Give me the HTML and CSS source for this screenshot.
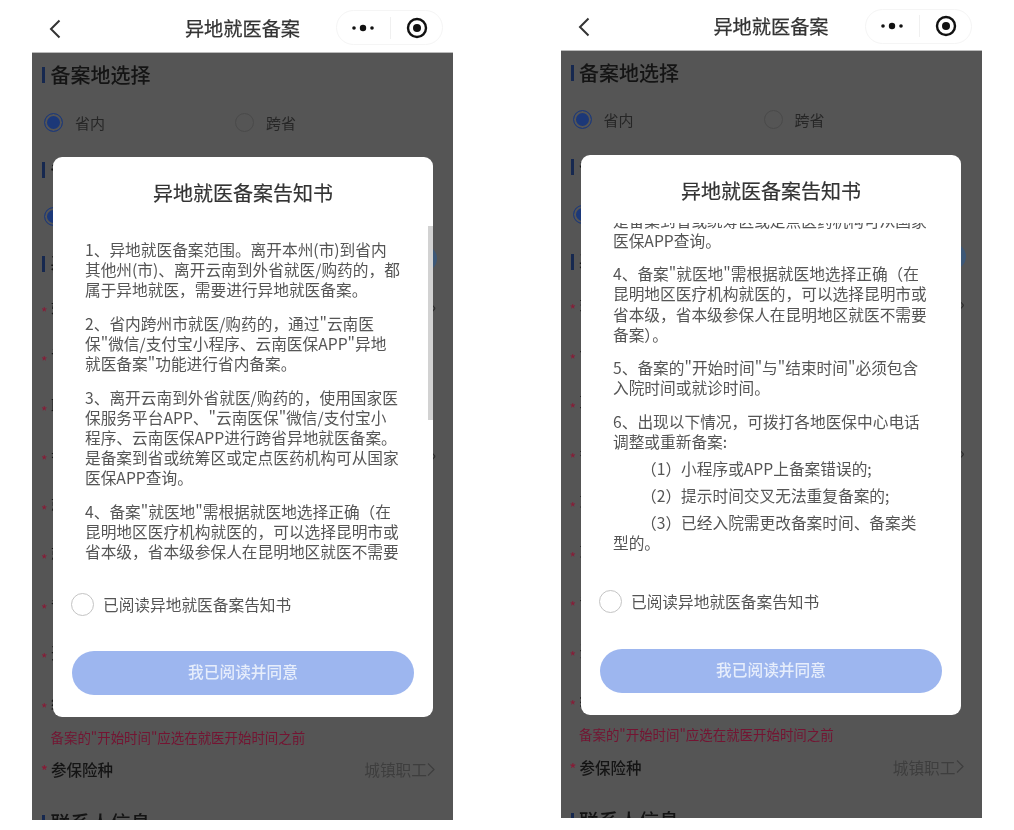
FILE: index.html
```html
<!DOCTYPE html>
<html lang="zh-CN">
<head>
<meta charset="utf-8">
<title>异地就医备案</title>
<link rel="stylesheet" href="styles.css">
</head>
<body>
<main class="screens">

<section class="phone">
  <header class="nav">
    <svg class="nav-back" width="12" height="20" viewBox="0 0 12 20"><path d="M10.5 1.5 2 10l8.500 8.500" fill="none" stroke="#333" stroke-width="2"/></svg>
    <h1 class="nav-title">异地就医备案</h1>
    <div class="capsule">
      <svg width="24" height="10" viewBox="0 0 24 10"><circle cx="3" cy="5" r="1.800" fill="#111"/><circle cx="12" cy="5" r="3.200" fill="#111"/><circle cx="21" cy="5" r="1.800" fill="#111"/></svg>
      <span class="capsule-line"></span>
      <svg width="22" height="22" viewBox="0 0 22 22"><circle cx="11" cy="11" r="9" fill="none" stroke="#111" stroke-width="2.400"/><circle cx="11" cy="11" r="4" fill="#111"/></svg>
    </div>
  </header>
  <div class="page">
    <div class="sec-title"><i class="sec-bar"></i>备案地选择</div>
    <div class="radio-row">
      <span class="radio-item"><i class="radio radio-on"></i>省内</span>
      <span class="radio-item"><i class="radio"></i>跨省</span>
    </div>
    <div class="sec-title"><i class="sec-bar"></i>备案类型</div>
    <div class="radio-row">
      <span class="radio-item"><i class="radio radio-on"></i>异地长期</span>
      <span class="radio-item"><i class="radio"></i>异地临时</span>
    </div>
    <div class="sec-title"><i class="sec-bar"></i>基本信息<span class="sec-pill">定位</span></div>
    <div class="fields">
      <div class="field"><em>*</em>姓名<span class="field-val">›</span></div>
      <div class="field"><em>*</em>证件号码</div>
      <div class="field"><em>*</em>联系电话</div>
      <div class="field"><em>*</em>参保地<span class="field-val">›</span></div>
      <div class="field"><em>*</em>就医地</div>
      <div class="field"><em>*</em>就医机构</div>
      <div class="field"><em>*</em>备案原因</div>
      <div class="field"><em>*</em>开始时间</div>
      <div class="field"><em>*</em>结束时间</div>
    </div>
    <p class="tip">备案的"开始时间"应选在就医开始时间之前</p>
    <div class="field field-strong"><em>*</em>参保险种<span class="field-val-wide">城镇职工<svg width="8" height="14" viewBox="0 0 8 14"><path d="M1 1l6 6-6 6" fill="none" stroke="#3e3e3e" stroke-width="1.200"/></svg></span></div>
    <div class="sec-title sec-title-last"><i class="sec-bar"></i>联系人信息</div>
  </div>

  <div class="modal">
    <h2 class="modal-title">异地就医备案告知书</h2>
    <div class="notice">
      <div class="notice-body">
        <p>1、异地就医备案范围。离开本州(市)到省内<br>其他州(市)、离开云南到外省就医/购药的，都<br>属于异地就医，需要进行异地就医备案。</p>
        <p>2、省内跨州市就医/购药的，通过"云南医<br>保"微信/支付宝小程序、云南医保APP"异地<br>就医备案"功能进行省内备案。</p>
        <p>3、离开云南到外省就医/购药的，使用国家医<br>保服务平台APP、"云南医保"微信/支付宝小<br>程序、云南医保APP进行跨省异地就医备案。<br>是备案到省或统筹区或定点医药机构可从国家<br>医保APP查询。</p>
        <p>4、备案"就医地"需根据就医地选择正确（在<br>昆明地区医疗机构就医的，可以选择昆明市或<br>省本级，省本级参保人在昆明地区就医不需要<br>备案）。</p>
      </div>
    </div>
    <i class="scroll-thumb"></i>
    <label class="agree"><i class="agree-circle"></i>已阅读异地就医备案告知书</label>
    <div class="agree-btn">我已阅读并同意</div>
  </div>
</section>

<section class="phone phone-b">
  <header class="nav">
    <svg class="nav-back" width="12" height="20" viewBox="0 0 12 20"><path d="M10.5 1.5 2 10l8.500 8.500" fill="none" stroke="#333" stroke-width="2"/></svg>
    <h1 class="nav-title">异地就医备案</h1>
    <div class="capsule">
      <svg width="24" height="10" viewBox="0 0 24 10"><circle cx="3" cy="5" r="1.800" fill="#111"/><circle cx="12" cy="5" r="3.200" fill="#111"/><circle cx="21" cy="5" r="1.800" fill="#111"/></svg>
      <span class="capsule-line"></span>
      <svg width="22" height="22" viewBox="0 0 22 22"><circle cx="11" cy="11" r="9" fill="none" stroke="#111" stroke-width="2.400"/><circle cx="11" cy="11" r="4" fill="#111"/></svg>
    </div>
  </header>
  <div class="page">
    <div class="sec-title"><i class="sec-bar"></i>备案地选择</div>
    <div class="radio-row">
      <span class="radio-item"><i class="radio radio-on"></i>省内</span>
      <span class="radio-item"><i class="radio"></i>跨省</span>
    </div>
    <div class="sec-title"><i class="sec-bar"></i>备案类型</div>
    <div class="radio-row">
      <span class="radio-item"><i class="radio radio-on"></i>异地长期</span>
      <span class="radio-item"><i class="radio"></i>异地临时</span>
    </div>
    <div class="sec-title"><i class="sec-bar"></i>基本信息<span class="sec-pill">定位</span></div>
    <div class="fields">
      <div class="field"><em>*</em>姓名<span class="field-val">›</span></div>
      <div class="field"><em>*</em>证件号码</div>
      <div class="field"><em>*</em>联系电话</div>
      <div class="field"><em>*</em>参保地<span class="field-val">›</span></div>
      <div class="field"><em>*</em>就医地</div>
      <div class="field"><em>*</em>就医机构</div>
      <div class="field"><em>*</em>备案原因</div>
      <div class="field"><em>*</em>开始时间</div>
      <div class="field"><em>*</em>结束时间</div>
    </div>
    <p class="tip">备案的"开始时间"应选在就医开始时间之前</p>
    <div class="field field-strong"><em>*</em>参保险种<span class="field-val-wide">城镇职工<svg width="8" height="14" viewBox="0 0 8 14"><path d="M1 1l6 6-6 6" fill="none" stroke="#3e3e3e" stroke-width="1.200"/></svg></span></div>
    <div class="sec-title sec-title-last"><i class="sec-bar"></i>联系人信息</div>
  </div>

  <div class="modal">
    <h2 class="modal-title">异地就医备案告知书</h2>
    <div class="notice">
      <div class="notice-body notice-body-scrolled">
        <p>是备案到省或统筹区或定点医药机构可从国家<br>医保APP查询。</p>
        <p>4、备案"就医地"需根据就医地选择正确（在<br>昆明地区医疗机构就医的，可以选择昆明市或<br>省本级，省本级参保人在昆明地区就医不需要<br>备案）。</p>
        <p>5、备案的"开始时间"与"结束时间"必须包含<br>入院时间或就诊时间。</p>
        <p class="tight">6、出现以下情况，可拨打各地医保中心电话<br>调整或重新备案:</p>
        <p class="tight sub">（1）小程序或APP上备案错误的;</p>
        <p class="tight sub">（2）提示时间交叉无法重复备案的;</p>
        <p class="sub">（3）已经入院需更改备案时间、备案类<br><span class="sub-wrap">型的。</span></p>
      </div>
    </div>
    <label class="agree"><i class="agree-circle"></i>已阅读异地就医备案告知书</label>
    <div class="agree-btn">我已阅读并同意</div>
  </div>
</section>

</main>
</body>
</html>
```

FILE: styles.css
```css
* { box-sizing: border-box; }

html, body {
  margin: 0;
  padding: 0;
  background: #fff;
}

body {
  font-family: "Noto Sans CJK SC", "Noto Sans", "Liberation Sans", sans-serif;
  overflow: hidden;
}

.screens {
  display: flex;
  align-items: flex-start;
  gap: 107.5px;
  padding-left: 32px;
  height: 830px;
}

.phone {
  position: relative;
  width: 421px;
  height: 820px;
  overflow: hidden;
  flex: none;
  filter: blur(0.6px);
  --nav-h: 53px;
}

.phone-b {
  height: 818px;
  --nav-h: 50.5px;
}

/* navigation bar */
.nav {
  position: relative;
  height: var(--nav-h);
  background: #fff;
  border-bottom: 1.5px solid #bbb;
  display: flex;
  align-items: center;
  justify-content: center;
  padding-top: 3px;
}

.nav-back {
  position: absolute;
  left: 17px;
  top: calc(var(--nav-h) / 2 - 8px);
}

.nav-title {
  margin: 0;
  font-size: 19.200px;
  font-weight: 400;
  -webkit-text-stroke: 0.25px #333;
  color: #333;
  line-height: 26px;
}

.capsule {
  position: absolute;
  left: 304px;
  top: calc(var(--nav-h) / 2 - 16.500px);
  width: 107px;
  height: 35px;
  border: 1px solid #f5f5f5;
  border-radius: 18px;
  display: flex;
  align-items: center;
  padding: 0 14px 0 14px;
  justify-content: space-between;
}

.capsule-line {
  width: 1px;
  height: 22px;
  background: #f0f0f0;
}

/* dimmed page behind the dialog */
.page {
  background: #555;
  height: calc(100% - var(--nav-h));
  color: #141414;
}

.sec-title {
  position: relative;
  height: 44px;
  display: flex;
  align-items: center;
  padding-left: 18.500px;
  font-size: 20px;
  font-weight: 500;
  line-height: 1;
  color: #141414;
}

.sec-bar {
  position: absolute;
  left: 10px;
  top: 14px;
  width: 3px;
  height: 16px;
  background: #16284f;
}

.sec-pill {
  position: absolute;
  right: 16px;
  top: 3px;
  width: 50px;
  height: 27px;
  border-radius: 14px;
  background: #3d5877;
  color: #3d5877;
  font-size: 12px;
  line-height: 27px;
  text-align: center;
}

.radio-row {
  display: flex;
  height: 50px;
  margin-bottom: 0.500px;
  align-items: center;
  padding-left: 12px;
  font-size: 15px;
  color: #262626;
}

.radio-item {
  display: flex;
  align-items: center;
  gap: 12px;
  width: 191px;
}

.radio {
  width: 19px;
  height: 19px;
  border: 1px solid #4a4a4a;
  border-radius: 50%;
  background: #555;
  flex: none;
}

.radio-on {
  border: 1.500px solid #1f3a78;
  background: #1c3878;
  box-shadow: inset 0 0 0 2px #555;
}

.fields { margin-top: -5px; }

.field {
  position: relative;
  height: 49.500px;
  display: flex;
  align-items: center;
  padding-left: 19px;
  font-size: 15.500px;
  color: #141414;
}

.field em {
  position: absolute;
  left: 9px;
  top: 50%;
  transform: translateY(calc(-50% + 1px));
  font-style: normal;
  color: #8a1a36;
  font-size: 14px;
  line-height: 1;
}

.fields .field em {
  transform: translateY(calc(-50% + 6px));
}

.field-val {
  position: absolute;
  right: 17px;
  font-size: 16px;
  color: #2a2a2a;
}

.field-val-wide {
  position: absolute;
  right: 18px;
  top: 50%;
  transform: translateY(-50%);
  display: flex;
  align-items: center;
  gap: 0;
  font-size: 15.700px;
  font-weight: 400;
  color: #3e3e3e;
}

.tip {
  margin: 0;
  height: 18px;
  padding: 1px 0 0 18.500px;
  font-size: 13.450px;
  line-height: 18px;
  color: #741432;
  white-space: nowrap;
}

.field-strong { font-weight: 500; }

.sec-title-last { margin-top: 7px; }

/* dialog */
.modal {
  position: absolute;
  left: 21px;
  top: 157px;
  width: 380px;
  height: 560px;
  background: #fff;
  border-radius: 9px;
  display: flex;
  flex-direction: column;
}

.phone-b .modal {
  left: 20.500px;
  top: 154.500px;
}

.modal-title {
  margin: 0;
  height: 68px;
  padding-top: 22px;
  font-size: 20px;
  font-weight: 400;
  line-height: 28px;
  text-align: center;
  color: #333;
  -webkit-text-stroke: 0.2px #333;
}

.notice {
  height: 335px;
  overflow: hidden;
  padding: 15px 0 0 32px;
  flex: none;
}

.notice-body {
  font-size: 15.700px;
  line-height: 20.200px;
  color: #555;
  white-space: nowrap;
}

.notice-body-scrolled {
  margin-top: -27px;
}

.notice-body p {
  margin: 0 0 13.200px;
}

.notice-body p.tight { margin-bottom: 6.800px; }

.notice-body .sub { padding-left: 28px; }

.sub-wrap { margin-left: -28px; }

.scroll-thumb {
  position: absolute;
  right: 0;
  top: 69px;
  width: 5px;
  height: 194px;
  background: #d2d2d2;
}

.agree {
  margin: 32px 0 0 18px;
  height: 24px;
  display: flex;
  align-items: center;
  gap: 9px;
  font-size: 15.700px;
  color: #555;
}

.agree-circle {
  width: 23px;
  height: 23px;
  border: 1px solid #c4c4c4;
  border-radius: 50%;
  flex: none;
}

.agree-btn {
  margin: 35px 0 0 19px;
  width: 342px;
  height: 44px;
  border-radius: 22px;
  background: #9db6ef;
  color: #e6edfb;
  font-size: 15.700px;
  font-weight: 500;
  line-height: 42px;
  text-align: center;
}
```
